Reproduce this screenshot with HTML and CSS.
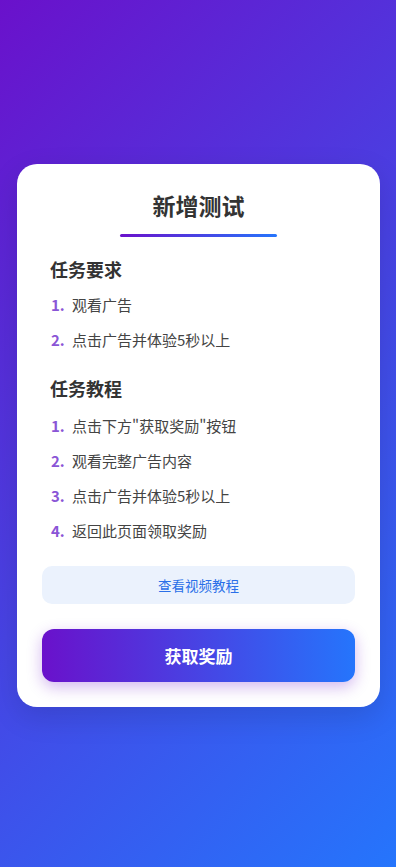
FILE: index.html
```html
<!DOCTYPE html>
<html lang="zh-CN">
<head>
<meta charset="utf-8">
<meta name="viewport" content="width=device-width, initial-scale=1">
<title>新增测试</title>
<link rel="stylesheet" href="styles.css">
</head>
<body>
<main class="card">
  <h1 class="title">新增测试</h1>
  <div class="title-bar"></div>

  <section class="section">
    <h2 class="section-title">任务要求</h2>
    <ol class="steps">
      <li class="step"><span class="num">1.</span><span>观看广告</span></li>
      <li class="step"><span class="num">2.</span><span>点击广告并体验5秒以上</span></li>
    </ol>
  </section>

  <section class="section section-2">
    <h2 class="section-title">任务教程</h2>
    <ol class="steps">
      <li class="step"><span class="num">1.</span><span>点击下方"获取奖励"按钮</span></li>
      <li class="step"><span class="num">2.</span><span>观看完整广告内容</span></li>
      <li class="step"><span class="num">3.</span><span>点击广告并体验5秒以上</span></li>
      <li class="step"><span class="num">4.</span><span>返回此页面领取奖励</span></li>
    </ol>
  </section>

  <button class="video-btn" type="button">查看视频教程</button>
  <button class="reward-btn" type="button">获取奖励</button>
</main>
</body>
</html>
```

FILE: styles.css
```css
* { box-sizing: border-box; }

html, body { height: 100%; }

body {
  margin: 0;
  padding: 19px 16px 16px 17px;
  min-height: 100vh;
  display: flex;
  align-items: center;
  justify-content: center;
  background: linear-gradient(135deg, #6a11cb 0%, #2575fc 100%);
  font-family: "Noto Sans CJK SC", "Noto Sans", sans-serif;
  color: #333;
}

.card {
  width: 363px;
  background: #fff;
  border-radius: 20px;
  padding: 25px;
  box-shadow: 0 10px 30px rgba(0, 0, 0, 0.12);
  display: flex;
  flex-direction: column;
}

.title {
  margin: 0;
  text-align: center;
  font-size: 23px;
  line-height: 33px;
  font-weight: 700;
  color: #333;
}

.title-bar {
  align-self: center;
  width: 157px;
  height: 3px;
  margin-top: 12px;
  border-radius: 2px;
  background: linear-gradient(90deg, #6a11cb, #2575fc);
}

.section {
  padding: 0 8px;
  margin-top: 19px;
}

.section-2 { margin-top: 18px; }

.section-title {
  margin: 0 0 4px;
  font-size: 18px;
  line-height: 27px;
  font-weight: 700;
  color: #333;
}

.section-2 .section-title { margin-bottom: 6px; }

.steps {
  list-style: none;
  margin: 0;
  padding: 0;
}

.step {
  display: flex;
  align-items: center;
  height: 35px;
  font-size: 15px;
  color: #444;
}

.num {
  width: 22px;
  padding-left: 1px;
  font-weight: 700;
  color: #8a55d6;
  flex: none;
}

.video-btn {
  margin-top: 18px;
  height: 38px;
  border: none;
  border-radius: 10px;
  background: #ebf2fd;
  color: #2a6fe8;
  font-family: inherit;
  font-size: 13.5px;
}

.reward-btn {
  margin-top: 25px;
  height: 53px;
  border: none;
  border-radius: 12px;
  background: linear-gradient(90deg, #6a11cb 0%, #2575fc 100%);
  color: #fff;
  font-family: inherit;
  font-size: 17px;
  font-weight: 700;
  box-shadow: 0 5px 15px rgba(106, 17, 203, 0.3);
}
```
